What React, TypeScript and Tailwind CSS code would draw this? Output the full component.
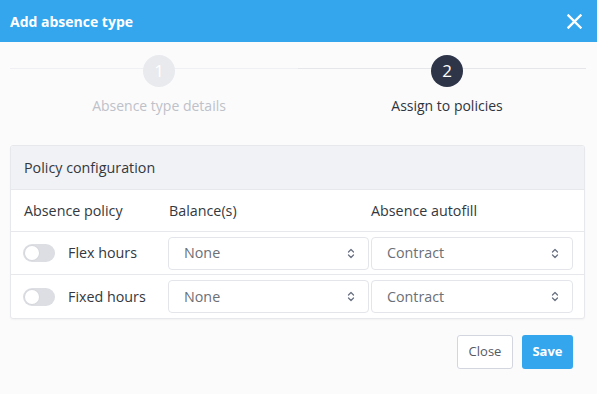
import React, { useState } from 'react';

type Row = { id: string; name: string; balance: string; autofill: string; on: boolean };

const Chevrons: React.FC = () => (
  <svg width="8" height="11" viewBox="0 0 8 11" fill="none" stroke="#6b7280" strokeWidth="1.3" strokeLinecap="round" strokeLinejoin="round">
    <path d="M1.5 4 L4 1.5 L6.5 4" />
    <path d="M1.5 7 L4 9.5 L6.5 7" />
  </svg>
);

const Select: React.FC<{ value: string; className?: string }> = ({ value, className }) => (
  <div className={`flex h-[33px] items-center justify-between rounded-[4px] border border-[#e3e5ea] bg-white pl-[15px] pr-[13px] text-[14.3px] text-[#6b6f76] ${className ?? ''}`}>
    <span>{value}</span>
    <Chevrons />
  </div>
);

const Toggle: React.FC<{ on: boolean; onClick: () => void }> = ({ on, onClick }) => (
  <button
    onClick={onClick}
    className={`flex h-[18px] w-[32px] items-center rounded-full p-[2px] ${on ? 'justify-end bg-[#33a6ee]' : 'justify-start bg-[#dcdee3]'}`}
  >
    <span className="h-[14px] w-[14px] rounded-full bg-white shadow-[0_0_0_1px_#d6d8dd]" />
  </button>
);

const App: React.FC = () => {
  const [rows, setRows] = useState<Row[]>([
    { id: 'flex', name: 'Flex hours', balance: 'None', autofill: 'Contract', on: false },
    { id: 'fixed', name: 'Fixed hours', balance: 'None', autofill: 'Contract', on: false },
  ]);

  const toggle = (id: string) => {
    setRows(prev => prev.map(r => (r.id === id ? { ...r, on: !r.on } : r)));
  };

  return (
    <div className="h-[394px] w-[597px] bg-[#fbfbfc] font-['Open_Sans',sans-serif] text-[#333840]">
      {/* header */}
      <div className="flex h-[42px] items-center justify-between bg-[#33a6ee] pl-[10px] pr-[15px]">
        <h1 className="text-[14px] font-bold text-white">Add absence type</h1>
        <svg width="15" height="15" viewBox="0 0 15 15" stroke="white" strokeWidth="2.4" strokeLinecap="square">
          <path d="M1.5 1.5 L13.5 13.5 M13.5 1.5 L1.5 13.5" />
        </svg>
      </div>

      {/* stepper */}
      <div className="relative ml-[15px] mt-[13px] flex w-[576px]">
        <div className="absolute left-[-5px] top-[13px] h-px w-[288px] bg-[#eef0f3]" />
        <div className="absolute left-[283px] top-[13px] h-px w-[288px] bg-[#e4e6ea]" />
        <div className="relative flex flex-1 flex-col items-center">
          <div className="flex h-[32px] w-[32px] items-center justify-center rounded-full bg-[#e8eaee] text-[17px] text-white">1</div>
          <span className="mt-[8px] text-[14px] text-[#bec1c8]">Absence type details</span>
        </div>
        <div className="relative flex flex-1 flex-col items-center">
          <div className="flex h-[32px] w-[32px] items-center justify-center rounded-full bg-[#2e3549] text-[17px] text-white">2</div>
          <span className="mt-[8px] text-[14px] text-[#2f343d]">Assign to policies</span>
        </div>
      </div>

      {/* card */}
      <div className="ml-[10px] mt-[29px] w-[575px] overflow-hidden rounded-[3px] border border-[#e6e8ec] bg-white shadow-[0_1px_2px_rgba(0,0,0,0.04)]">
        <div className="flex h-[44px] items-center border-b border-[#e6e8ec] bg-[#f0f2f6] px-[13px] text-[14.3px]">Policy configuration</div>
        <div className="flex h-[42px] items-center border-b border-[#e6e8ec] text-[14.3px]">
          <div className="w-[157px] pl-[13px]">Absence policy</div>
          <div className="w-[203px] pl-[1px]">Balance(s)</div>
          <div>Absence autofill</div>
        </div>
        {rows.map((r, i) => (
          <div key={r.id} className={`flex h-[43px] items-center ${i < rows.length - 1 ? 'border-b border-[#e6e8ec]' : ''}`}>
            <div className="flex w-[157px] items-center gap-[13px] pl-[12px] text-[14.3px]">
              <Toggle on={r.on} onClick={() => toggle(r.id)} />
              <span>{r.name}</span>
            </div>
            <Select value={r.balance} className="w-[201px]" />
            <Select value={r.autofill} className="ml-[2px] w-[202px]" />
          </div>
        ))}
      </div>

      {/* footer */}
      <div className="mr-[24px] mt-[16px] flex justify-end gap-[9px]">
        <button className="h-[34px] w-[56px] rounded-[3px] border border-[#d3d6df] bg-white text-[13px] text-[#555a63]">Close</button>
        <button className="h-[34px] w-[51px] rounded-[3px] bg-[#33a6ee] text-[13px] font-bold text-white">Save</button>
      </div>
    </div>
  );
};

export default App;
